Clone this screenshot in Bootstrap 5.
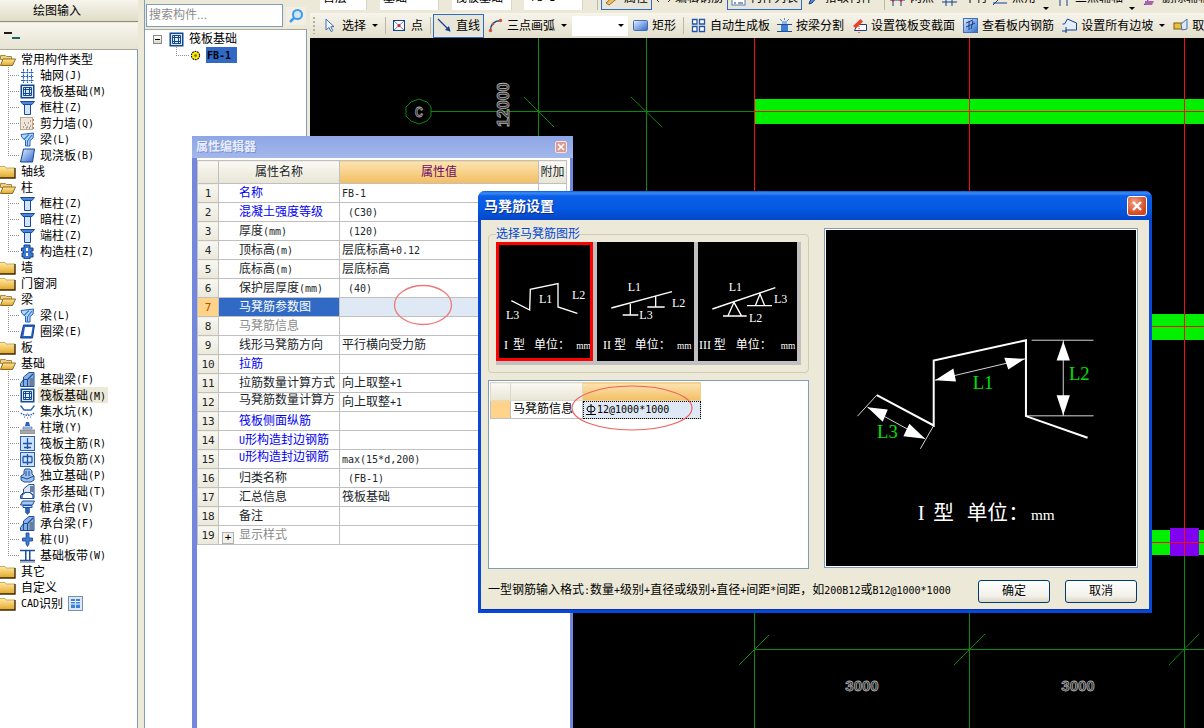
<!DOCTYPE html>
<html lang="zh">
<head>
<meta charset="utf-8">
<title>属性编辑器</title>
<link href="https://cdn.jsdelivr.net/npm/bootstrap@5.3.0/dist/css/bootstrap.min.css" rel="stylesheet">
<style>
html,body{height:100%;overflow:hidden}
body{width:1204px;height:728px;background:#ece9d8;font:12px/16px "Liberation Sans","Noto Sans CJK SC",sans-serif;color:#000;position:relative}
.lt{font:10px/12px "DejaVu Sans Mono",monospace}
.defs{display:block;width:0;height:0}
.shell{height:728px}
.leftp{width:144px;flex:none}
.leftin{width:138px;height:728px}
.headbtn{height:22px;line-height:22px;padding-left:33px;background:linear-gradient(#f7f5ec,#e0dcc8);border-bottom:1px solid #8d8a78}
.ltool{height:26px;margin-top:1px;background:linear-gradient(#f8f6ee,#e6e3d2);padding:9px 0 0 4px}
.ltool svg{display:block}
.tree{background:#fff;border-top:1px solid #aca899;border-right:1px solid #7f9db9;padding-top:1px;height:679px;overflow:hidden}
.trow{height:16px;line-height:18px;display:flex;align-items:flex-start;white-space:nowrap}
.trow .lt{line-height:18px}
.tree .trow>svg.fd{width:16px;height:16px;flex:none;margin-right:5px}
.tgrp{margin-left:8px;background:repeating-linear-gradient(#8f8f8f 0 1px,transparent 1px 2px) 0 0/1px calc(100% - 8px) no-repeat}
.conn{width:12px;height:1px;flex:none;margin-top:8px;background:repeating-linear-gradient(90deg,#8f8f8f 0 1px,transparent 1px 2px)}
.tgrp svg.ic{width:15px;height:15px;flex:none;margin:1px 5px 0 0}
.sel{background:#ece9d8;margin-left:-2px;padding:0 2px;height:16px;line-height:18px}
.cadb{width:15px;height:15px;margin:1px 0 0 5px;flex:none}
.midp{width:166px;flex:none;border-left:1px solid #7f9db9}
.midin{width:162px}
.searchw{height:29px;padding:4px 0 0 1px}
.sinput{width:137px;height:23px;border:1px solid #7f9db9;background:#fff;color:#8c8c8c;padding-left:2px;line-height:21px}
.sbtn{width:20px;height:18px;margin-left:3px;margin-top:3px;display:block}
.ctree{height:699px;background:#fff;border-top:1px solid #aca899;border-right:1px solid #7f9db9;overflow:hidden;padding:1px 0 0 8px}
.minus{width:9px;height:9px;border:1px solid #8a8a8a;background:linear-gradient(#fff,#dcd8c8);flex:none;margin-right:7px;display:flex;align-items:center;justify-content:center}
.minus i{display:block;width:5px;height:1px;background:#000}
.ctrow{height:16px;white-space:nowrap}
.ctgrp{margin-left:23px;background:repeating-linear-gradient(#8f8f8f 0 1px,transparent 1px 2px) 0 0/1px 8px no-repeat}
.ctgrp .conn{width:14px;margin-top:0}
.fbsel{background:#316ac5;height:16px;line-height:16px;padding:0 6px 0 1px;margin-left:5px}
.fbsel .lt{font-weight:700}
.rightp{width:894px;flex:none;overflow:hidden}
.tb1{height:10px;padding-left:10px;overflow:hidden;align-items:flex-end;white-space:nowrap}
.cmb{height:24px;background:#fff;flex:none;display:flex;align-items:center;justify-content:space-between;padding-left:3px}
.cmb i{display:block;width:11px;height:24px;background:#ece9d8;border-left:1px solid #d8d5c4}
.wa{width:57px}.wb{width:69px}.wc{width:70px}
.tb2{height:25px;margin-top:3px;background:linear-gradient(#f7f5ec,#e2decb);padding-left:3px;align-items:center;white-space:nowrap}
.grip{width:2px;height:17px;flex:none;background:repeating-linear-gradient(#b5b09a 0 2px,transparent 2px 4px)}
.tbi{display:flex;align-items:center;gap:4px;flex:none;height:24px}
.tbi svg{width:15px;height:15px;flex:none;display:block}
.g5{gap:5px}.g7{gap:7px}
.act{border:1px solid #316ac5;background:#e8e6d8;padding:0 3px;box-sizing:border-box}
.sep{width:1px;height:17px;background:#bdb9a6;flex:none}
.car{width:0;height:0;border:3px solid transparent;border-top:3px solid #000;border-bottom:0;flex:none}
.m2{margin-left:2px}.m3{margin-left:3px}.m4{margin-left:4px}.m5{margin-left:5px}.m6{margin-left:6px}.m7{margin-left:7px}.m8{margin-left:8px}.m11{margin-left:11px}
.wline{width:51px}.wlist{width:75px}.wprop{width:51px}
.cbox{width:56px;height:20px;background:#fff;display:flex;align-items:center;justify-content:flex-end;padding-right:4px;flex:none}
.cvs{display:block;width:894px;height:690px;background:#000}
.cvs text{font-family:"Liberation Sans",sans-serif;font-weight:700;fill:#2a2a2a;stroke:#b0b0b0;stroke-width:.8px}
.win{position:absolute}
.propwin{left:192px;top:136px;width:381px;height:592px;background:#fff;border-left:5px solid #7388dc;border-right:3px solid #7388dc}
.ptitle{height:22px;margin-left:-5px;margin-right:-3px;padding-left:4px;background:linear-gradient(#8ea6e6,#a3b7ea);color:#e6eeff;font-weight:700;font-size:12px;line-height:22px;text-shadow:1px 1px #7d90cf;justify-content:space-between;align-items:center}
.pclose{width:12px;height:12px;margin-right:6px;background:#dd9a92;border:1px solid #f2e6e4;border-radius:2px;display:flex;align-items:center;justify-content:center}
.ptable.table{width:369px;table-layout:fixed;margin:2px 0 0;border-color:#c0c0c0;--bs-border-color:#c0c0c0}
.ptable.table td,.ptable.table th{padding:0;height:19px;line-height:17px;font-weight:400;border:1px solid #c0c0c0;white-space:nowrap;overflow:hidden;background:#fff;box-shadow:none;vertical-align:middle}
.ptable.table tr.hd>*{height:23px;background:linear-gradient(#faf9f3,#e8e5d5);text-align:center}
.ptable.table tr.hd>.hv{background:linear-gradient(#fde3b0,#f2be62);color:#6a0a6a}
.ptable.table td.no{background:linear-gradient(#f8f7f0,#ebe8da);text-align:center;font:11px/17px "DejaVu Sans Mono",monospace}
.ptable.table td.nm{padding-left:20px}
.ptable.table td.vl{padding-left:2px}
.ptable.table td.no.hot{background:#ffd48a;color:#b84a00}
.ptable.table td.nm.hot{background:#316ac5;color:#fff}
.ptable.table td.vl.hot{background:#dfe8f5}
.blu{color:#0000f0}.gry{color:#8a8a8a}
.up{position:relative;top:-2px}
.plus{display:inline-flex;width:12px;height:12px;border:1px solid #b0b0b0;background:#f2f0e6;color:#000;margin-left:-17px;margin-right:5px;vertical-align:-2px;align-items:center;justify-content:center;font:11px/10px "DejaVu Sans Mono",monospace}
.ringa{position:absolute;left:193px;top:146px;width:66px;height:46px}
.dlg{left:478px;top:191px;width:674px;height:422px;background:#ece9d8;border:3px solid #0848d8;border-top:0;border-radius:7px 7px 0 0;box-shadow:inset 0 -1px #0a2fb0}
.dtitle{height:29px;margin:0 -3px;padding:0 5px 0 6px;border-radius:7px 7px 0 0;background:linear-gradient(#0a58e0 0,#3d8df5 2px,#0a5fe8 5px,#0558e2 18px,#0446c8 100%);color:#fff;font-weight:700;font-size:14px;text-shadow:1px 1px #0b2f8e;align-items:center;justify-content:space-between}
.dclose{width:20px;height:20px;background:radial-gradient(circle at 35% 30%,#f0a088,#d4481f 70%);border:1px solid #fff;border-radius:3px;display:flex;align-items:center;justify-content:center}
.dbody{padding:7px 11px 0 7px}
.dcolL{width:321px;flex:none}
fieldset.gbox{border:1px solid #cfccb8;border-radius:4px;padding:1px 7px 7px;height:146px}
fieldset.gbox legend{float:none;width:auto;margin:0;padding:0;font-size:12px;line-height:14px;color:#0046d5}
.thumbs{width:305px;height:123px;background:#c0c0c0;gap:4px;align-items:flex-start}
.thumbs svg{display:block;background:#000;flex:none}
.thumbs text{font-family:"Liberation Serif","Noto Sans CJK SC",serif;fill:#fff;font-size:36px}
.rsel{outline:3px solid #f00;outline-offset:-3px}
.gridb{height:189px;margin-top:7px;border:1px solid #7f9db9;background:#fff;padding:1px;position:relative}
.gt{width:210px;table-layout:fixed}
.gt td{padding:0;border:1px solid #c0c0c0;white-space:nowrap;line-height:17px}
.gt .hh td{height:18px;background:linear-gradient(#faf9f3,#e8e5d5);border-color:#dedbca}
.gt .hh td.hv{background:linear-gradient(#fde3b0,#f2be62);border-color:#f0d090}
.gt td.oc{background:#ffd48a}
.gt td.cur{background:#dfe8f5;outline:1px dotted #000;outline-offset:-1px;padding-left:3px}
.gt td.lb{padding-left:2px}
.rb{width:10px;height:11px;display:inline-block;vertical-align:-2px;margin-right:1px}
.ringb{position:absolute;left:81px;top:3px;width:124px;height:48px;overflow:visible}
.prev{width:314px;height:340px;margin:1px 0 0 15px;flex:none;border:1px solid #7f9db9;padding:1px;background:#fff}
.prev svg{display:block;background:#000}
.prev text{font-family:"Liberation Serif","Noto Sans CJK SC",serif}
.dfoot{padding:2px 12px 0 7px;height:40px;justify-content:space-between;align-items:center;white-space:nowrap}
.dfoot .btn{--bs-btn-padding-y:0;--bs-btn-padding-x:0;--bs-btn-font-size:12px;--bs-btn-border-radius:3px;--bs-btn-border-color:#003c74;--bs-btn-color:#000;--bs-btn-bg:#f4f3ee;width:72px;height:23px;line-height:21px;background:linear-gradient(#fff,#f2f1ea 70%,#dcd8c8);margin-top:3px}
.gap15{gap:15px}
</style>
</head>
<body>
<svg class="defs" aria-hidden="true">
<defs>
<linearGradient id="gf" x1="0" y1="0" x2="0" y2="1"><stop offset="0" stop-color="#ffeaa6"/><stop offset="1" stop-color="#e2a522"/></linearGradient>
<linearGradient id="gb" x1="0" y1="0" x2="1" y2="1"><stop offset="0" stop-color="#e6f0ff"/><stop offset="1" stop-color="#2c68cc"/></linearGradient>
<symbol id="fo" viewBox="0 0 16 16"><path d="M.5 4.500h5l1 1h5v3H.5z" fill="#eed284" stroke="#a98b3e"/><path d="M.5 14.500 3 8h12.500l-3 6.500z" fill="url(#gf)" stroke="#8a6a1c"/></symbol>
<symbol id="fc" viewBox="0 0 16 16"><path d="M0 3.500h5l1.200 1.500H15v10H0z" fill="url(#gf)"/><path d="M0 3.500h5l1.200 1.500H15" fill="none" stroke="#c9a95a"/><path d="M15 5v10H0" fill="none" stroke="#3a2c08" stroke-width="1.400"/></symbol>
<symbol id="ax" viewBox="0 0 15 15"><path d="M1 4.500h13M1 8.500h13M1 12.500h13M3.500 1v14M7.500 1v14M11.500 1v14" stroke="#2a62b8" stroke-width="1.100" stroke-dasharray="2 .6" fill="none"/></symbol>
<symbol id="rf" viewBox="0 0 15 15"><rect x=".5" y=".5" width="14" height="14" fill="#14488f"/><rect x="2" y="2" width="11" height="11" fill="#dce8f8"/><path d="M3.500 3.500h8v8h-8zM5.500 3v9M9.500 3v9M3 5.500h9M3 9.500h9" fill="none" stroke="#14488f"/></symbol>
<symbol id="cl" viewBox="0 0 15 15"><path d="M.5 1.500h14l-2.500 3H3z" fill="#4a86dc" stroke="#164a9c"/><path d="M4.500 4.500h6v10h-6z" fill="#d4e3fa" stroke="#164a9c"/></symbol>
<symbol id="wl" viewBox="0 0 15 15"><rect x=".5" y="1.500" width="12" height="12" fill="#f0e6d8" stroke="#b9a894"/><path d="M3 11h1M5 9h1M7 11h1M8 7h1M10 10h1M6 12h1M10 5h1M4 7h1M9 12h1" stroke="#5a5a5a"/><path d="M13.500 3v2M13.500 7v2M13.500 11v2" stroke="#e0702a"/></symbol>
<symbol id="bm" viewBox="0 0 15 15"><path d="M1 2.500 13.500 1 13 6l-3 2.500V14H5.500V8.500L2 5.500z" fill="#bcd6f6" stroke="#1f62b8"/><path d="M9 2.500 4 7.500M12 3 7.500 9v5" fill="none" stroke="#2a7be0" stroke-width="1.200"/></symbol>
<symbol id="sl" viewBox="0 0 15 15"><path d="M3.500 1h11l-2 13H.5z" fill="url(#gb)" stroke="#14408f"/></symbol>
<symbol id="gz" viewBox="0 0 15 15"><path d="M4 1h6v3h3v3h-2v2h2v4h-3v2H4v-2H2V9h1.500V7H1.500V4H4z" fill="#3a78d2" stroke="#133f8a"/><path d="M6 4h2v3H6zM6 9h2v3H6z" fill="#fff"/></symbol>
<symbol id="rg" viewBox="0 0 15 15"><path d="M3.500 1h11l-2 13H.5z" fill="#2560c4" stroke="#14408f"/><path d="M5 3h7.500l-1.500 9H3.500z" fill="#fff"/></symbol>
<symbol id="fb" viewBox="0 0 15 15"><path d="M.5 14.500v-3l3-4V5L9 .5h5v14z" fill="#8fb2e4" stroke="#1a4f9e"/><path d="M3.500 14.500V7.500h4v7M7.500 7.500 13 2" fill="none" stroke="#1a4f9e" stroke-width="1.200"/><path d="M9.500 6h4v8h-4z" fill="#6a7f9a"/></symbol>
<symbol id="pt" viewBox="0 0 15 15"><path d="M.5 1.500 4 6h7l3.500-4.500" fill="none" stroke="#2a62b8" stroke-width="1.400"/><path d="M1 9c3 3 10 3 13 0" fill="none" stroke="#2a62b8" stroke-dasharray="1.500 1" stroke-width="1.500"/><path d="M4 13h1M7 14h1M10 13h1M7 10h1" stroke="#2a62b8"/></symbol>
<symbol id="dn" viewBox="0 0 15 15"><path d="M6 2h3l1 4H5z" fill="#2a62b8"/><path d="M3 7h9v2H3z" fill="#bcd0ea" stroke="#2a62b8" stroke-width=".6"/><rect x="0" y="10" width="15" height="3.500" fill="#a8a8a8" stroke="#6e6e6e" stroke-width=".6"/></symbol>
<symbol id="zj" viewBox="0 0 15 15"><rect x=".5" y=".5" width="14" height="14" fill="#cfe0fa" stroke="#2a62b8"/><path d="M7.500 2v11M3 7.500h9M4 11.500h7" stroke="#1c54a8" stroke-width="1.300"/></symbol>
<symbol id="fj" viewBox="0 0 15 15"><rect x=".5" y=".5" width="14" height="14" fill="#cfe0fa" stroke="#2a62b8"/><path d="M7.500 2v11M3 4.500h9M3 10.500h9M3 4.500v6M12 4.500v6" stroke="#1c54a8" stroke-width="1.300" fill="none"/></symbol>
<symbol id="dl" viewBox="0 0 15 15"><path d="M5 1h5l2 2v3l2 2v4l-3 2H4l-3-2V8l3-2V3z" fill="#9fbfe8" stroke="#1a4f9e"/><path d="M6 3v5M9 3v5M1 9l6 2 7-3" fill="none" stroke="#1a4f9e"/></symbol>
<symbol id="tx" viewBox="0 0 15 15"><path d="M.5 14.500v-3l3-3V5L9 .5h5v14z" fill="#d8e6f8" stroke="#1a4f9e"/><path d="M2 14V11l3-2.500h5L13 11v3" fill="#fff" stroke="#1a4f9e" stroke-width="1.200"/><path d="M10 2h4v6h-4z" fill="#6a7f9a"/></symbol>
<symbol id="ct" viewBox="0 0 15 15"><path d="M2.500 1h12l-2 4h-12z" fill="#a8c6ee" stroke="#1a4f9e"/><path d="M3 5.500h9v2H3z" fill="#cfe0fa" stroke="#1a4f9e"/><path d="M5.500 7.500h4v5l-2 2-2-2z" fill="#2a62b8" stroke="#1a4f9e" stroke-width=".6"/></symbol>
<symbol id="pl" viewBox="0 0 15 15"><path d="M6 1h3v5h3.500v3H9v3l-1.500 2.500L6 12V9H2.500V6H6z" fill="#3f7ed6" stroke="#163f8a" stroke-width=".8"/></symbol>
<symbol id="bd" viewBox="0 0 15 15"><path d="M0 2.500h15M0 12.500h15" stroke="#1a4f9e" stroke-width="1.500"/><path d="M5 3h1.500v9H5zM9 3h1.500v9H9z" fill="#1a4f9e"/><path d="M0 14h15" stroke="#9a9a9a" stroke-width="1.400"/></symbol>
<symbol id="ptr" viewBox="0 0 15 15"><path d="M3 1v11l3-2.500 2 4 1.800-.8-2-4H11z" fill="#f2f6fc" stroke="#3f6fb4"/></symbol>
<symbol id="dot" viewBox="0 0 15 15"><rect x="1.500" y="2.500" width="11" height="10" fill="#fff" stroke="#1a3f8a"/><path d="M2 3l10 9M12 3 2 12" stroke="#6b86c6"/><circle cx="7" cy="7.500" r="1.500" fill="#e02020"/></symbol>
<symbol id="lin" viewBox="0 0 15 15"><path d="M1 1l12 12" stroke="#14408f" stroke-width="1.300"/><path d="M13.500 13.500 8 12l4-4z" fill="#14408f"/></symbol>
<symbol id="arc" viewBox="0 0 15 15"><path d="M2.500 12.500C2.500 7 6 3 12.500 2.500" fill="none" stroke="#14408f" stroke-width="1.300"/><circle cx="2.500" cy="12.500" r="1.700" fill="#d8502a"/><circle cx="12.500" cy="2.500" r="1.700" fill="#d8502a"/><circle cx="5" cy="6" r="1.300" fill="#d8502a"/></symbol>
<symbol id="rct" viewBox="0 0 15 15"><rect x=".5" y="2.500" width="14" height="10" rx="1" fill="url(#gb)" stroke="#3f6fb4"/></symbol>
<symbol id="sq4" viewBox="0 0 15 15"><path d="M1.500 1.500h4.500v4.500H1.500zM8.500 1.500h5v4.500h-5zM1.500 8.500h4.500v5H1.500zM8.500 8.500h5v5h-5z" fill="#fff" stroke="#2456a6" stroke-width="1.300"/></symbol>
<symbol id="spl" viewBox="0 0 15 15"><path d="M0 6.500h15M0 13.500h15" stroke="#1a4f9e"/><rect x="4" y="7" width="7" height="6" fill="#3f7ed6"/><rect x="5" y="3" width="5" height="3" fill="#8fb4e8"/><path d="M3 1l2 2M12 1l-2 2M7.500 0v2" stroke="#5a84c6"/></symbol>
<symbol id="chg" viewBox="0 0 15 15"><path d="M5.500 6.500h9v6h-12z" fill="#fff" stroke="#14408f"/><path d="M1 8 8.500 1 11 3.500 4 10.500z" fill="#e2452a"/><path d="M7 8v7" stroke="#e00" stroke-dasharray="1 1"/></symbol>
<symbol id="vw" viewBox="0 0 15 15"><rect x=".5" y=".5" width="14" height="14" fill="url(#gb)" stroke="#3f6fb4"/><path d="M3 5l7-3M3 9l9-4M6 3v9M10 3l-2 8" stroke="#14408f" fill="none"/></symbol>
<symbol id="slp" viewBox="0 0 15 15"><path d="M.5 6h2l3-5 9 4v7H4" fill="#e2ecfa" stroke="#14408f"/><path d="M0 13h5M4 9v6" stroke="#14408f"/><path d="M7 4l6 3" stroke="#fff" stroke-dasharray="1 1"/></symbol>
<symbol id="tak" viewBox="0 0 15 15"><rect x="1" y="5" width="8" height="6" fill="#e8c23a" stroke="#7a5c10"/><path d="M8 6l6-5v10l-5 1z" fill="#dce8f8" stroke="#4a6ea8"/></symbol>
<symbol id="prp" viewBox="0 0 15 15"><path d="M1 12 11 3l3 3-10 8z" fill="#e8c26a" stroke="#a0702a"/><path d="M3 5h7" stroke="#7a7a7a"/></symbol>
<symbol id="dbl" viewBox="0 0 15 15"><path d="M0 8h15M3 5 0 8l3 3M12 5l3 3-3 3" fill="none" stroke="#333"/></symbol>
<symbol id="lst" viewBox="0 0 15 15"><rect x="1" y="1" width="13" height="13" fill="#fff" stroke="#5a7aa8"/><path d="M3 4h2M7 4h5M3 8h2M7 8h5M3 12h2M7 12h5" stroke="#14408f"/></symbol>
<symbol id="pen" viewBox="0 0 15 15"><path d="M3 13l1-3 7-8 2 2-7 8z" fill="#5a8ad2" stroke="#14408f"/></symbol>
<symbol id="two" viewBox="0 0 15 15"><path d="M3 0v15M11 0v15M0 9h15" stroke="#14408f"/><circle cx="3" cy="9" r="1.500" fill="#d02020"/><circle cx="11" cy="9" r="1.500" fill="#d02020"/></symbol>
<symbol id="par" viewBox="0 0 15 15"><path d="M0 5h15M0 11h15M4 0v15M10 0v15" stroke="#14408f"/></symbol>
<symbol id="ang" viewBox="0 0 15 15"><path d="M1 12h14M1 14 12 3" stroke="#14408f"/><circle cx="12" cy="3" r="1.700" fill="#d02020"/></symbol>
<symbol id="thr" viewBox="0 0 15 15"><circle cx="5" cy="3" r="2" fill="#d02020"/><path d="M5 5v10M12 0v15" stroke="#14408f"/></symbol>
<symbol id="del" viewBox="0 0 15 15"><path d="M2 14 12 2" stroke="#14408f"/><path d="M3 10h9l-2 4H3z" fill="#b060b0"/></symbol>
</defs>
</svg>

<div class="shell d-flex">
  <div class="leftp">
    <div class="leftin">
      <div class="headbtn">绘图输入</div>
      <div class="ltool"><svg width="16" height="8" viewBox="0 0 16 8"><path d="M0 1h8" stroke="#1a1a1a" stroke-width="2"/><path d="M8 6h8" stroke="#1d5f6e" stroke-width="2"/></svg></div>
      <div class="tree">
        <div class="trow"><svg class="fd"><use href="#fo"/></svg>常用构件类型</div>
        <div class="tgrp">
          <div class="trow"><i class="conn"></i><svg class="ic"><use href="#ax"/></svg>轴网<span class="lt">(J)</span></div>
          <div class="trow"><i class="conn"></i><svg class="ic"><use href="#rf"/></svg>筏板基础<span class="lt">(M)</span></div>
          <div class="trow"><i class="conn"></i><svg class="ic"><use href="#cl"/></svg>框柱<span class="lt">(Z)</span></div>
          <div class="trow"><i class="conn"></i><svg class="ic"><use href="#wl"/></svg>剪力墙<span class="lt">(Q)</span></div>
          <div class="trow"><i class="conn"></i><svg class="ic"><use href="#bm"/></svg>梁<span class="lt">(L)</span></div>
          <div class="trow"><i class="conn"></i><svg class="ic"><use href="#sl"/></svg>现浇板<span class="lt">(B)</span></div>
        </div>
        <div class="trow"><svg class="fd"><use href="#fc"/></svg>轴线</div>
        <div class="trow"><svg class="fd"><use href="#fo"/></svg>柱</div>
        <div class="tgrp">
          <div class="trow"><i class="conn"></i><svg class="ic"><use href="#cl"/></svg>框柱<span class="lt">(Z)</span></div>
          <div class="trow"><i class="conn"></i><svg class="ic"><use href="#cl"/></svg>暗柱<span class="lt">(Z)</span></div>
          <div class="trow"><i class="conn"></i><svg class="ic"><use href="#cl"/></svg>端柱<span class="lt">(Z)</span></div>
          <div class="trow"><i class="conn"></i><svg class="ic"><use href="#gz"/></svg>构造柱<span class="lt">(Z)</span></div>
        </div>
        <div class="trow"><svg class="fd"><use href="#fc"/></svg>墙</div>
        <div class="trow"><svg class="fd"><use href="#fc"/></svg>门窗洞</div>
        <div class="trow"><svg class="fd"><use href="#fo"/></svg>梁</div>
        <div class="tgrp">
          <div class="trow"><i class="conn"></i><svg class="ic"><use href="#bm"/></svg>梁<span class="lt">(L)</span></div>
          <div class="trow"><i class="conn"></i><svg class="ic"><use href="#rg"/></svg>圈梁<span class="lt">(E)</span></div>
        </div>
        <div class="trow"><svg class="fd"><use href="#fc"/></svg>板</div>
        <div class="trow"><svg class="fd"><use href="#fo"/></svg>基础</div>
        <div class="tgrp">
          <div class="trow"><i class="conn"></i><svg class="ic"><use href="#fb"/></svg>基础梁<span class="lt">(F)</span></div>
          <div class="trow"><i class="conn"></i><svg class="ic"><use href="#rf"/></svg><span class="sel">筏板基础<span class="lt">(M)</span></span></div>
          <div class="trow"><i class="conn"></i><svg class="ic"><use href="#pt"/></svg>集水坑<span class="lt">(K)</span></div>
          <div class="trow"><i class="conn"></i><svg class="ic"><use href="#dn"/></svg>柱墩<span class="lt">(Y)</span></div>
          <div class="trow"><i class="conn"></i><svg class="ic"><use href="#zj"/></svg>筏板主筋<span class="lt">(R)</span></div>
          <div class="trow"><i class="conn"></i><svg class="ic"><use href="#fj"/></svg>筏板负筋<span class="lt">(X)</span></div>
          <div class="trow"><i class="conn"></i><svg class="ic"><use href="#dl"/></svg>独立基础<span class="lt">(P)</span></div>
          <div class="trow"><i class="conn"></i><svg class="ic"><use href="#tx"/></svg>条形基础<span class="lt">(T)</span></div>
          <div class="trow"><i class="conn"></i><svg class="ic"><use href="#ct"/></svg>桩承台<span class="lt">(V)</span></div>
          <div class="trow"><i class="conn"></i><svg class="ic"><use href="#fb"/></svg>承台梁<span class="lt">(F)</span></div>
          <div class="trow"><i class="conn"></i><svg class="ic"><use href="#pl"/></svg>桩<span class="lt">(U)</span></div>
          <div class="trow"><i class="conn"></i><svg class="ic"><use href="#bd"/></svg>基础板带<span class="lt">(W)</span></div>
        </div>
        <div class="trow"><svg class="fd"><use href="#fc"/></svg>其它</div>
        <div class="trow"><svg class="fd"><use href="#fc"/></svg>自定义</div>
        <div class="trow"><svg class="fd"><use href="#fc"/></svg><span class="lt">CAD</span>识别<svg class="cadb" viewBox="0 0 15 15"><rect x=".5" y=".5" width="14" height="14" fill="#dbe8f8" stroke="#7f8ea8"/><path d="M3 3h4v9H3zM8 3h4v9H8z" fill="#3a82dc"/><path d="M3 5.500h4M3 8h4M8 5.500h4M8 8h4" stroke="#fff"/></svg></div>
      </div>
    </div>
  </div>

  <div class="midp">
    <div class="midin">
      <div class="searchw d-flex">
        <div class="sinput">搜索构件...</div>
        <svg class="sbtn" viewBox="0 0 20 18"><rect width="20" height="18" fill="#f1efe4"/><circle cx="11.500" cy="7.500" r="4.500" fill="#cfe6fb" stroke="#3f9be8" stroke-width="2"/><path d="M8 11l-4 4" stroke="#3f9be8" stroke-width="2.500"/></svg>
      </div>
      <div class="ctree">
        <div class="ctrow d-flex align-items-center"><span class="minus"><i></i></span><svg width="15" height="15" class="flex-none"><use href="#rf"/></svg><span class="m5">筏板基础</span></div>
        <div class="ctgrp">
          <div class="ctrow d-flex align-items-center"><i class="conn"></i><svg width="11" height="11" viewBox="0 0 12 12"><circle cx="6" cy="6" r="4.500" fill="#ffe800" stroke="#1a1a1a" stroke-width="1.200" stroke-dasharray="2 .8"/><circle cx="6" cy="6" r="1.500" fill="#7a6a00"/></svg><span class="fbsel"><span class="lt">FB-1</span></span></div>
        </div>
      </div>
    </div>
  </div>

  <div class="rightp">
    <div class="tb1 d-flex">
      <div class="cmb wa"><span>首层</span><i></i></div>
      <div class="cmb wb m3"><span>基础</span><i></i></div>
      <div class="cmb wc m3"><span>筏板基础</span><i></i></div>
      <div class="cmb wb m2"><span class="lt ms-1">FB-1</span><i></i></div>
      <span class="sep m4"></span>
      <div class="tbi act wprop m3"><svg><use href="#prp"/></svg>属性</div>
      <div class="tbi m4"><svg><use href="#dbl"/></svg>编辑钢筋</div>
      <div class="tbi act wlist m4"><svg><use href="#lst"/></svg>构件列表</div>
      <div class="tbi m4"><svg><use href="#pen"/></svg>拾取构件</div>
      <span class="sep m11"></span>
      <div class="tbi g5 m5"><svg><use href="#two"/></svg>两点</div>
      <div class="tbi g7 m8"><svg><use href="#par"/></svg>平行</div>
      <div class="tbi g5 m4"><svg><use href="#ang"/></svg>点角</div>
      <span class="car m7"></span>
      <div class="tbi g5 m6"><svg><use href="#thr"/></svg>三点辅轴</div>
      <span class="car m6"></span>
      <div class="tbi g5 m7"><svg><use href="#del"/></svg>删除辅轴</div>
    </div>
    <div class="tb2 d-flex">
      <span class="grip"></span>
      <div class="tbi m8"><svg><use href="#ptr"/></svg>选择</div>
      <span class="car m6"></span>
      <span class="sep m7"></span>
      <div class="tbi m6"><svg><use href="#dot"/></svg>点</div>
      <span class="sep m7"></span>
      <div class="tbi act wline m2"><svg><use href="#lin"/></svg>直线</div>
      <div class="tbi m4"><svg><use href="#arc"/></svg>三点画弧</div>
      <span class="car m6"></span>
      <div class="cbox m5"><span class="car"></span></div>
      <div class="tbi m5"><svg><use href="#rct"/></svg>矩形</div>
      <span class="sep m7"></span>
      <div class="tbi m7"><svg><use href="#sq4"/></svg>自动生成板</div>
      <div class="tbi m7"><svg><use href="#spl"/></svg>按梁分割</div>
      <div class="tbi m8"><svg><use href="#chg"/></svg>设置筏板变截面</div>
      <div class="tbi m8"><svg><use href="#vw"/></svg>查看板内钢筋</div>
      <div class="tbi m8"><svg><use href="#slp"/></svg>设置所有边坡</div>
      <span class="car m6"></span>
      <div class="tbi m8"><svg><use href="#tak"/></svg>取消</div>
    </div>
    <svg class="cvs" viewBox="310 38 894 690">
      <rect x="754" y="99" width="450" height="25" fill="#00f000"/>
      <rect x="754" y="314" width="450" height="26" fill="#00f000"/>
      <rect x="754" y="530" width="450" height="25" fill="#00f000"/>
      <rect x="1170" y="528" width="29" height="28" fill="#8000f0"/>
      <g stroke="#0a8a0a" fill="none">
        <path d="M538.500 38V400M646.500 38V400M431 111.500H754M754.500 556V728M969.500 556V728M1184.500 556V728M754 649.500H1204"/>
        <path d="M524 97l30 30M631 97l31 30M739 665l30-30M954 665l31-31M1169 665l30-31"/>
        <polygon points="419,99 427,102 431,107 431,116 427,121 419,124 411,121 406,116 406,107 411,102"/>
      </g>
      <g stroke="#f01010" fill="none">
        <path d="M754.500 38V556M969.500 38V556M1184.500 38V556M754 111.500H1204M754 326.500H1204M754 542.500H1204"/>
      </g>
      <text x="415" y="117" font-size="14" textLength="8" lengthAdjust="spacingAndGlyphs">C</text>
      <text transform="translate(509 127) rotate(-90)" font-size="16">12000</text>
      <text x="862" y="691" font-size="15" text-anchor="middle">3000</text>
      <text x="1078" y="691" font-size="15" text-anchor="middle">3000</text>
    </svg>
  </div>
</div>

<div class="win propwin">
  <div class="ptitle d-flex"><span>属性编辑器</span><span class="pclose"><svg width="8" height="8" viewBox="0 0 8 8"><path d="M1 1l6 6M7 1 1 7" stroke="#fff" stroke-width="1.500"/></svg></span></div>
  <table class="ptable table">
    <colgroup><col style="width:21px"><col style="width:121px"><col style="width:199px"><col style="width:28px"></colgroup>
    <tbody>
    <tr class="hd"><th></th><th>属性名称</th><th class="hv">属性值</th><th>附加</th></tr>
    <tr><td class="no">1</td><td class="nm blu">名称</td><td class="vl"><span class="lt">FB-1</span></td><td></td></tr>
    <tr><td class="no">2</td><td class="nm blu">混凝土强度等级</td><td class="vl"><span class="lt">&nbsp;(C30)</span></td><td></td></tr>
    <tr><td class="no">3</td><td class="nm">厚度<span class="lt">(mm)</span></td><td class="vl"><span class="lt">&nbsp;(120)</span></td><td></td></tr>
    <tr><td class="no">4</td><td class="nm">顶标高<span class="lt">(m)</span></td><td class="vl">层底标高<span class="lt">+0.12</span></td><td></td></tr>
    <tr><td class="no">5</td><td class="nm">底标高<span class="lt">(m)</span></td><td class="vl">层底标高</td><td></td></tr>
    <tr><td class="no">6</td><td class="nm">保护层厚度<span class="lt">(mm)</span></td><td class="vl"><span class="lt">&nbsp;(40)</span></td><td></td></tr>
    <tr><td class="no hot">7</td><td class="nm hot">马凳筋参数图</td><td class="vl hot"></td><td></td></tr>
    <tr><td class="no">8</td><td class="nm gry">马凳筋信息</td><td class="vl"></td><td></td></tr>
    <tr><td class="no">9</td><td class="nm">线形马凳筋方向</td><td class="vl">平行横向受力筋</td><td></td></tr>
    <tr><td class="no">10</td><td class="nm blu">拉筋</td><td class="vl"></td><td></td></tr>
    <tr><td class="no">11</td><td class="nm">拉筋数量计算方式</td><td class="vl">向上取整<span class="lt">+1</span></td><td></td></tr>
    <tr><td class="no">12</td><td class="nm"><span class="up">马凳筋数量计算方</span></td><td class="vl">向上取整<span class="lt">+1</span></td><td></td></tr>
    <tr><td class="no">13</td><td class="nm blu">筏板侧面纵筋</td><td class="vl"></td><td></td></tr>
    <tr><td class="no">14</td><td class="nm blu"><span class="lt">U</span>形构造封边钢筋</td><td class="vl"></td><td></td></tr>
    <tr><td class="no">15</td><td class="nm blu"><span class="up"><span class="lt">U</span>形构造封边钢筋</span></td><td class="vl"><span class="lt">max(15*d,200)</span></td><td></td></tr>
    <tr><td class="no">16</td><td class="nm">归类名称</td><td class="vl"><span class="lt">&nbsp;(FB-1)</span></td><td></td></tr>
    <tr><td class="no">17</td><td class="nm">汇总信息</td><td class="vl">筏板基础</td><td></td></tr>
    <tr><td class="no">18</td><td class="nm">备注</td><td class="vl"></td><td></td></tr>
    <tr><td class="no">19</td><td class="nm gry"><span class="plus">+</span>显示样式</td><td class="vl"></td><td></td></tr>
    </tbody>
  </table>
  <svg class="ringa" viewBox="0 0 66 46"><ellipse cx="33" cy="23" rx="28.500" ry="19.500" fill="none" stroke="#f07878" stroke-width="1.300"/></svg>
</div>

<div class="win dlg">
  <div class="dtitle d-flex"><span>马凳筋设置</span><span class="dclose"><svg width="12" height="12" viewBox="0 0 12 12"><path d="M2 2l8 8M10 2l-8 8" stroke="#fff" stroke-width="2.400"/></svg></span></div>
  <div class="dbody d-flex">
    <div class="dcolL">
      <fieldset class="gbox">
        <legend>选择马凳筋图形</legend>
        <div class="thumbs d-flex">
          <svg class="rsel" width="97" height="119" viewBox="54 156 291 357">
            <path d="M100 332 155 360 157 298 240 281 240 351 298 370" fill="none" stroke="#fff" stroke-width="4"/>
            <text x="84" y="386">L3</text><text x="183" y="338">L1</text><text x="282" y="328">L2</text>
            <text y="478"><tspan x="78">I</tspan><tspan x="105">型</tspan><tspan x="168">单位</tspan><tspan x="240">：</tspan><tspan x="295" font-size="28">mm</tspan></text>
          </svg>
          <svg width="97" height="119" viewBox="357 156 291 357">
            <path d="M400 354 582 305M457 342V374M434 375H481M533 320V351M508 351H560" fill="none" stroke="#fff" stroke-width="4"/>
            <text x="449" y="304">L1</text><text x="582" y="350">L2</text><text x="484" y="388">L3</text>
            <text y="478"><tspan x="375">II</tspan><tspan x="408">型</tspan><tspan x="470">单位</tspan><tspan x="542">：</tspan><tspan x="597" font-size="28">mm</tspan></text>
          </svg>
          <svg width="99" height="119" viewBox="660 156 297 357">
            <path d="M703 357 892 293M735 378H806M750 377 768 337 790 377M807 347H882M832 347 846 312 860 347" fill="none" stroke="#fff" stroke-width="4"/>
            <text x="752" y="302">L1</text><text x="888" y="338">L3</text><text x="813" y="396">L2</text>
            <text y="478"><tspan x="663">III</tspan><tspan x="707">型</tspan><tspan x="773">单位</tspan><tspan x="845">：</tspan><tspan x="908" font-size="28">mm</tspan></text>
          </svg>
        </div>
      </fieldset>
      <div class="gridb">
        <table class="gt">
          <colgroup><col style="width:20px"><col style="width:72px"><col style="width:118px"></colgroup>
          <tbody>
            <tr class="hh"><td></td><td></td><td class="hv"></td></tr>
            <tr><td class="oc"></td><td class="lb">马凳筋信息</td><td class="cur"><svg class="rb" viewBox="0 0 10 11"><ellipse cx="5" cy="5" rx="4" ry="3" fill="none" stroke="#000"/><path d="M5 0v10M0 10.500h10" stroke="#000"/></svg><span class="lt">12@1000*1000</span></td></tr>
          </tbody>
        </table>
        <svg class="ringb" viewBox="0 0 124 48"><ellipse cx="62" cy="24" rx="60" ry="22" fill="none" stroke="#f06060" stroke-width="1.200"/></svg>
      </div>
    </div>
    <div class="prev">
      <svg width="310" height="336" viewBox="33 121 930 1009">
        <path d="M185 617 356 708V513L633 452V680L818 745" fill="none" stroke="#fff" stroke-width="6"/>
        <path d="M127 680 185 617M356 708 316 778M650 452H836M633 679H836M745 452V679M360 572 630 508M157 653 330 748" fill="none" stroke="#fff" stroke-width="2.500"/>
        <path d="M745 455 725 513H765ZM745 677 725 617H765ZM360 572 415 537 423 576ZM630 508 568 505 580 540ZM157 653 218 660 203 697ZM330 748 283 703 265 740Z" fill="#fff"/>
        <text x="762" y="570" font-size="56" fill="#00e000">L2</text>
        <text x="473" y="597" font-size="56" fill="#00e000">L1</text>
        <text x="186" y="747" font-size="56" fill="#00e000">L3</text>
        <text y="992" font-size="62" fill="#fff"><tspan x="308">I</tspan><tspan x="355">型</tspan><tspan x="455">单位</tspan><tspan x="580">：</tspan><tspan x="648" font-size="46">mm</tspan></text>
      </svg>
    </div>
  </div>
  <div class="dfoot d-flex">
    <span>一型钢筋输入格式<span class="lt">:</span>数量<span class="lt">+</span>级别<span class="lt">+</span>直径或级别<span class="lt">+</span>直径<span class="lt">+</span>间距<span class="lt">*</span>间距，如<span class="lt">200B12</span>或<span class="lt">B12@1000*1000</span></span>
    <div class="d-flex gap15">
      <button type="button" class="btn">确定</button>
      <button type="button" class="btn">取消</button>
    </div>
  </div>
</div>
</body>
</html>
